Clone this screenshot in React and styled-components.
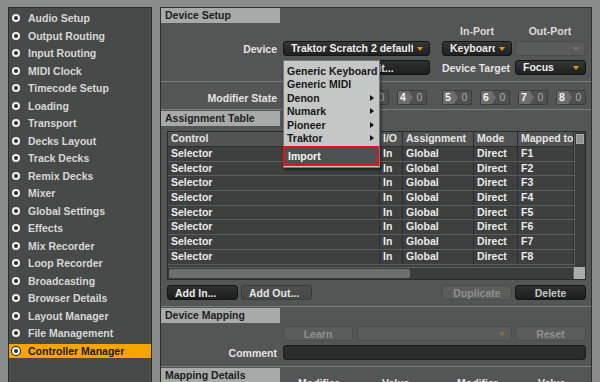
import styled, { createGlobalStyle } from 'styled-components';

const GlobalStyle = createGlobalStyle`
  html, body {
    margin: 0;
    padding: 0;
  }
  body {
    background: #8b8d8c;
    font-family: "Liberation Sans", Arial, sans-serif;
    font-size: 10.5px;
    font-weight: bold;
    overflow: hidden;
  }
  * {
    box-sizing: border-box;
  }
`;

const NAV = [
  'Audio Setup', 'Output Routing', 'Input Routing', 'MIDI Clock', 'Timecode Setup',
  'Loading', 'Transport', 'Decks Layout', 'Track Decks', 'Remix Decks', 'Mixer',
  'Global Settings', 'Effects', 'Mix Recorder', 'Loop Recorder', 'Broadcasting',
  'Browser Details', 'Layout Manager', 'File Management', 'Controller Manager',
];

const MENU = [
  { label: 'Generic Keyboard' },
  { label: 'Generic MIDI' },
  { label: 'Denon', sub: true },
  { label: 'Numark', sub: true },
  { label: 'Pioneer', sub: true },
  { label: 'Traktor', sub: true },
];

const ROWS = ['F1', 'F2', 'F3', 'F4', 'F5', 'F6', 'F7', 'F8', 'F9'];

function App() {
  return (
    <>
      <GlobalStyle />
      <Frame>
        <Sidebar>
          {NAV.map((name) => (
            <NavItem key={name} $active={name === 'Controller Manager'}>
              <Bullet $active={name === 'Controller Manager'} />
              {name}
            </NavItem>
          ))}
        </Sidebar>

        <Main>
          <SectionHead><HeadLabel>Device Setup</HeadLabel></SectionHead>
          <DeviceForm>
            <span />
            <span />
            <ColHead>In-Port</ColHead>
            <ColHead>Out-Port</ColHead>

            <Label>Device</Label>
            <SelectWrap>
              <Select $w={147}>
                <SelectText>Traktor Scratch 2 default</SelectText>
                <Caret />
              </Select>
              <Menu>
                {MENU.map((item) => (
                  <MenuItem key={item.label}>
                    {item.label}
                    {item.sub && <SubArrow />}
                  </MenuItem>
                ))}
                <MenuImport>Import</MenuImport>
              </Menu>
            </SelectWrap>
            <Select $w={70}>
              <SelectText>Keyboard</SelectText>
              <Caret />
            </Select>
            <Select $w={71} $dim>
              <SelectText />
              <Caret $dim />
            </Select>

            <span />
            <BtnPair>
              <Btn $w={70} $left>Add...</Btn>
              <Btn $w={73} $left>Edit...</Btn>
            </BtnPair>
            <Label $pad={5}>Device Target</Label>
            <Select $w={71}>
              <SelectText>Focus</SelectText>
              <Caret />
            </Select>
          </DeviceForm>

          <Divider $top={6} />

          <ModRow>
            <Label>Modifier State</Label>
            <ModGroup>
              {[1, 2, 3, 4].map((n) => (
                <ModCell key={n}><ModNum>{n}</ModNum><ModVal>0</ModVal></ModCell>
              ))}
            </ModGroup>
            <ModGroup $gap={15}>
              {[5, 6, 7, 8].map((n) => (
                <ModCell key={n}><ModNum>{n}</ModNum><ModVal>0</ModVal></ModCell>
              ))}
            </ModGroup>
          </ModRow>

          <Divider $top={4} />
          <SectionHead $top={1}><HeadLabel>Assignment Table</HeadLabel></SectionHead>

          <Table>
            <TableData>
              <HeadRow>
                <Cell>Control</Cell>
                <Cell>I/O</Cell>
                <Cell>Assignment</Cell>
                <Cell>Mode</Cell>
                <Cell>Mapped to</Cell>
              </HeadRow>
              {ROWS.map((key) => (
                <BodyRow key={key}>
                  <Cell>Selector</Cell>
                  <Cell>In</Cell>
                  <Cell>Global</Cell>
                  <Cell>Direct</Cell>
                  <Cell>{key}</Cell>
                </BodyRow>
              ))}
            </TableData>
            <VScroll><VThumb /></VScroll>
            <HScroll><HThumb /></HScroll>
            <Corner />
          </Table>

          <ButtonRow>
            <Btn $w={71} $left>Add In...</Btn>
            <Btn $w={71} $left $variant="mid">Add Out...</Btn>
            <Spacer />
            <Btn $w={70} $variant="dim">Duplicate</Btn>
            <Btn $w={71} $variant="delete">Delete</Btn>
          </ButtonRow>

          <Divider $top={6} />
          <SectionHead $top={1}><HeadLabel>Device Mapping</HeadLabel></SectionHead>

          <MapRow>
            <Btn $w={70} $variant="dim">Learn</Btn>
            <Select $w={155} $dim>
              <SelectText />
              <Caret $dim />
            </Select>
            <Btn $w={71} $variant="dim">Reset</Btn>
          </MapRow>

          <CommentRow>
            <Label>Comment</Label>
            <CommentInput />
          </CommentRow>

          <Divider $top={6} />
          <SectionHead $top={1}>
            <HeadLabel>Mapping Details</HeadLabel>
            <DetailCols>
              <span>Modifier</span>
              <span>Value</span>
              <span>Modifier</span>
              <span>Value</span>
            </DetailCols>
          </SectionHead>
        </Main>
      </Frame>
    </>
  );
}

export default App;

const Frame = styled.div`
  display: flex;
  gap: 8px;
  height: 382px;
  padding: 7px 8px 0;
  overflow: hidden;
`;

const Sidebar = styled.div`
  width: 144px;
  flex-shrink: 0;
  background: #474a49;
  border: 1px solid #2a2c2b;
  border-bottom: none;
  padding-top: 3px;
  display: flex;
  flex-direction: column;
`;

const NavItem = styled.div`
  display: flex;
  align-items: center;
  gap: 8px;
  height: 14px;
  margin-bottom: 3.5px;
  padding-left: 3px;
  white-space: nowrap;
  background: ${(p) => (p.$active ? '#f6a400' : 'transparent')};
  color: ${(p) => (p.$active ? '#1c1c1c' : '#d6d8d7')};
`;

const Bullet = styled.span`
  width: 8px;
  height: 8px;
  border-radius: 50%;
  background: #2c2d2d;
  border: 2.5px solid #f2f2f2;
  box-shadow: ${(p) => (p.$active ? '0 0 0 1px #1e1e1e' : 'none')};
  flex-shrink: 0;
`;

const Main = styled.div`
  flex: 1;
  min-width: 0;
  background: #545655;
  border: 1px solid #2c2e2d;
  border-bottom: none;
  display: flex;
  flex-direction: column;
  overflow: hidden;
`;

const SectionHead = styled.div`
  display: flex;
  height: 15px;
  flex-shrink: 0;
  margin-top: ${(p) => p.$top || 0}px;
`;

const HeadLabel = styled.div`
  width: 119px;
  flex-shrink: 0;
  background: #a6abaa;
  color: #1f2020;
  padding-left: 4px;
  line-height: 15px;
  white-space: nowrap;
`;

const DetailCols = styled.div`
  display: grid;
  grid-template-columns: 84px 75px 81px auto;
  padding: 9px 0 0 18px;
  color: #e2e2e2;
  line-height: 13px;
`;

const DeviceForm = styled.div`
  display: grid;
  grid-template-columns: 122px 159px 73px 71px;
  grid-template-rows: 17px 19px 15px;
  align-items: start;
  padding-top: 1px;
  flex-shrink: 0;
`;

const Label = styled.div`
  display: flex;
  justify-content: flex-end;
  align-items: center;
  height: 15px;
  padding-right: ${(p) => p.$pad ?? 6}px;
  color: #e4e4e4;
  white-space: nowrap;
  ${(p) => (p.as === undefined ? '' : '')}
`;

const ColHead = styled.div`
  height: 15px;
  line-height: 15px;
  width: ${70}px;
  text-align: center;
  color: #dcdcdc;
`;

const SelectWrap = styled.div`
  position: relative;
`;

const Select = styled.div`
  display: flex;
  align-items: center;
  width: ${(p) => p.$w}px;
  height: 15px;
  padding: 0 6px 0 7px;
  border-radius: 3px;
  background: ${(p) => (p.$dim ? '#5a5c5b' : 'linear-gradient(#353636, #1f2020)')};
  border: 1px solid ${(p) => (p.$dim ? '#4a4c4b' : '#141515')};
  color: #eeeeee;
  line-height: 13px;
`;

const SelectText = styled.span`
  flex: 1;
  overflow: hidden;
  white-space: nowrap;
  margin-right: 4px;
`;

const Caret = styled.span`
  width: 0;
  height: 0;
  border-left: 3.5px solid transparent;
  border-right: 3.5px solid transparent;
  border-top: 4px solid ${(p) => (p.$dim ? '#8f6e40' : '#f39200')};
`;

const Menu = styled.div`
  position: absolute;
  top: 19px;
  left: 0;
  width: 97px;
  z-index: 10;
  background: #c4c7c5;
  border: 1px solid #77797a;
  box-shadow: 1px 2px 3px rgba(0, 0, 0, 0.5);
  padding: 3px 0 1px;
`;

const MenuItem = styled.div`
  display: flex;
  align-items: center;
  justify-content: space-between;
  height: 13.5px;
  padding: 0 5px 0 3px;
  color: #171717;
  white-space: nowrap;
`;

const SubArrow = styled.span`
  width: 0;
  height: 0;
  border-top: 3.5px solid transparent;
  border-bottom: 3.5px solid transparent;
  border-left: 4px solid #111;
`;

const MenuImport = styled.div`
  margin: 1px 0 0 -1px;
  height: 20px;
  line-height: 16px;
  padding-left: 3px;
  background: #4c5352;
  color: #f4f4f4;
  border: 2px solid #e3121b;
`;

const BtnPair = styled.div`
  display: flex;
  gap: 4px;
`;

const BTN = {
  dark: { bg: 'linear-gradient(#2f3030, #1c1d1d)', border: '#141515', color: '#eaeaea' },
  mid: { bg: 'linear-gradient(#4e504f, #464847)', border: '#3a3c3b', color: '#e6e6e6' },
  dim: { bg: '#5b5d5c', border: '#4b4d4c', color: '#8f9190' },
  delete: { bg: 'linear-gradient(#2f3030, #1c1d1d)', border: '#141515', color: '#c4c6c5' },
};

const Btn = styled.div`
  display: flex;
  align-items: center;
  justify-content: ${(p) => (p.$left ? 'flex-start' : 'center')};
  width: ${(p) => p.$w}px;
  height: 15px;
  flex-shrink: 0;
  padding-left: ${(p) => (p.$left ? 7 : 0)}px;
  border-radius: 3px;
  background: ${(p) => BTN[p.$variant || 'dark'].bg};
  border: 1px solid ${(p) => BTN[p.$variant || 'dark'].border};
  color: ${(p) => BTN[p.$variant || 'dark'].color};
  white-space: nowrap;
`;

const Divider = styled.div`
  height: 1px;
  flex-shrink: 0;
  background: #7a7c7b;
  margin-top: ${(p) => p.$top}px;
`;

const ModRow = styled.div`
  display: flex;
  align-items: center;
  height: 15px;
  margin-top: 8px;
  flex-shrink: 0;

  & > ${Label} {
    width: 122px;
  }
`;

const ModGroup = styled.div`
  display: flex;
  gap: 8px;
  margin-left: ${(p) => p.$gap || 0}px;
`;

const ModCell = styled.div`
  display: flex;
  width: 30px;
  height: 15px;
  border: 1px solid #3c3e3d;
  border-radius: 2px;
  background: #4f5150;
  overflow: hidden;
`;

const ModNum = styled.span`
  width: 15px;
  padding-left: 2px;
  line-height: 13px;
  background: #6c6e6d;
  color: #f4f4f4;
  clip-path: polygon(0 0, 72% 0, 100% 50%, 72% 100%, 0 100%);
`;

const ModVal = styled.span`
  flex: 1;
  line-height: 13px;
  text-align: center;
  color: #a9abaa;
  font-weight: normal;
`;

const Table = styled.div`
  display: grid;
  grid-template-columns: 1fr 11px;
  grid-template-rows: 1fr 12px;
  height: 149px;
  margin: 5px 5px 0 6px;
  flex-shrink: 0;
  border: 1px solid #2a2c2b;
  background: #3d403f;
`;

const TableData = styled.div`
  overflow: hidden;
`;

const COLS = '212px 23px 71px 44px 1fr';

const HeadRow = styled.div`
  display: grid;
  grid-template-columns: ${COLS};
  height: 15px;
  background: #515453;
  border-bottom: 1px solid #2d2f2e;
  color: #e6e6e6;
`;

const BodyRow = styled.div`
  display: grid;
  grid-template-columns: ${COLS};
  height: 14.7px;
  border-bottom: 1px solid #5a5d5c;
  background: #3d403f;
  color: #ececec;
`;

const Cell = styled.div`
  padding-left: 3px;
  border-right: 1px solid #2b2d2c;
  white-space: nowrap;
  overflow: hidden;
  line-height: 13.7px;
`;

const VScroll = styled.div`
  background: #393c3b;
  border-left: 1px solid #5f6160;
  padding: 2px 1px;
`;

const VThumb = styled.div`
  height: 10px;
  background: #8e9190;
  border: 1px solid #a6a9a8;
`;

const HScroll = styled.div`
  background: #393c3b;
  border-top: 1px solid #5f6160;
  border-right: 1px solid #5f6160;
  padding: 1px 0 1px 1px;
`;

const HThumb = styled.div`
  width: 241px;
  height: 100%;
  border-radius: 2px;
  background: #6c6f6e;
`;

const Corner = styled.div`
  background: #aaadac;
`;

const ButtonRow = styled.div`
  display: flex;
  gap: 3px;
  margin: 5px 5px 0 6px;
  flex-shrink: 0;
`;

const Spacer = styled.div`
  flex: 1;
`;

const MapRow = styled.div`
  display: flex;
  gap: 4px;
  margin: 3px 0 0 122px;
  flex-shrink: 0;

  & > ${Btn}:last-child {
    margin-left: -1px;
  }
`;

const CommentRow = styled.div`
  display: flex;
  margin: 4px 5px 0 0;
  flex-shrink: 0;

  & > ${Label} {
    width: 122px;
  }
`;

const CommentInput = styled.div`
  flex: 1;
  height: 15px;
  border-radius: 3px;
  background: #2a2b2b;
  border: 1px solid #1b1c1c;
`;
